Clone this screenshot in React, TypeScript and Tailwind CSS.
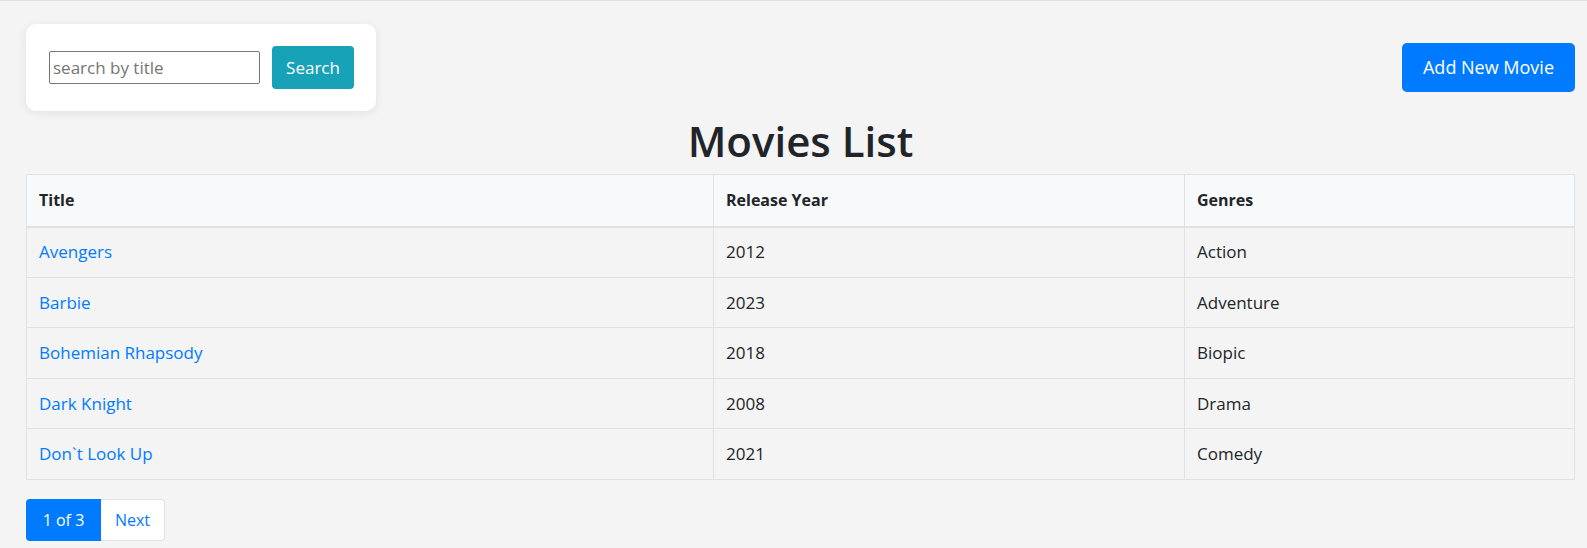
import React from 'react';

interface Movie {
  title: string;
  year: number;
  genre: string;
}

const MOVIES: Movie[] = [
  { title: 'Avengers', year: 2012, genre: 'Action' },
  { title: 'Barbie', year: 2023, genre: 'Adventure' },
  { title: 'Bohemian Rhapsody', year: 2018, genre: 'Biopic' },
  { title: 'Dark Knight', year: 2008, genre: 'Drama' },
  { title: 'Don`t Look Up', year: 2021, genre: 'Comedy' },
];

const SearchBox: React.FC = () => (
  <div className="mt-[23px] flex w-[350px] items-center gap-3 rounded-[10px] bg-white py-[22px] pl-[23px] pr-[22px] shadow-[0_2px_10px_rgba(0,0,0,0.08)]">
    <input
      type="text"
      placeholder="search by title"
      className="h-[33px] w-[211px] rounded-[2px] border border-[#767676] bg-white px-[3px] text-[17px] text-[#212529] outline-none placeholder:text-[#757575]"
    />
    <button className="h-[43px] w-[82px] rounded-[4px] bg-[#17a2b8] text-[17px] text-white">
      Search
    </button>
  </div>
);

const MoviesTable: React.FC<{ movies: Movie[] }> = ({ movies }) => (
  <table className="w-full border-collapse border border-[#dee2e6] text-[17px] text-[#212529]">
    <thead>
      <tr className="h-[52px] bg-[#f8f9fa] text-[16px]">
        <th className="w-[687px] border border-b-2 border-[#dee2e6] px-3 text-left font-bold">Title</th>
        <th className="w-[471px] border border-b-2 border-[#dee2e6] px-3 text-left font-bold">Release Year</th>
        <th className="border border-b-2 border-[#dee2e6] px-3 text-left font-bold">Genres</th>
      </tr>
    </thead>
    <tbody>
      {movies.map((movie) => (
        <tr key={movie.title} className="h-[50.5px]">
          <td className="border border-[#dee2e6] px-3">
            <a href="#" className="text-[#007bff]">
              {movie.title}
            </a>
          </td>
          <td className="border border-[#dee2e6] px-3">{movie.year}</td>
          <td className="border border-[#dee2e6] px-3">{movie.genre}</td>
        </tr>
      ))}
    </tbody>
  </table>
);

const Pagination: React.FC = () => (
  <div className="mt-[19px] flex text-[16px]">
    <span className="flex h-[42px] w-[75px] items-center justify-center rounded-l-[4px] bg-[#007bff] text-white">
      1 of 3
    </span>
    <a
      href="#"
      className="flex h-[42px] w-[64px] items-center justify-center rounded-r-[4px] border border-l-0 border-[#dee2e6] bg-white text-[#007bff]"
    >
      Next
    </a>
  </div>
);

const App: React.FC = () => {
  return (
    <div className="min-h-screen border-t border-[#dde3d8] bg-[#f4f4f4] font-['Open_Sans',sans-serif]">
      <div className="pl-[26px] pr-[12px]">
        <div className="flex items-start justify-between">
          <SearchBox />
          <button className="mt-[42px] h-[49px] w-[173px] rounded-[5px] bg-[#007bff] text-[18px] text-white">
            Add New Movie
          </button>
        </div>
        <h1 className="h-[63px] text-center text-[42px] font-semibold leading-[60px] text-[#212529]">
          Movies List
        </h1>
        <MoviesTable movies={MOVIES} />
        <Pagination />
      </div>
    </div>
  );
};

export default App;
